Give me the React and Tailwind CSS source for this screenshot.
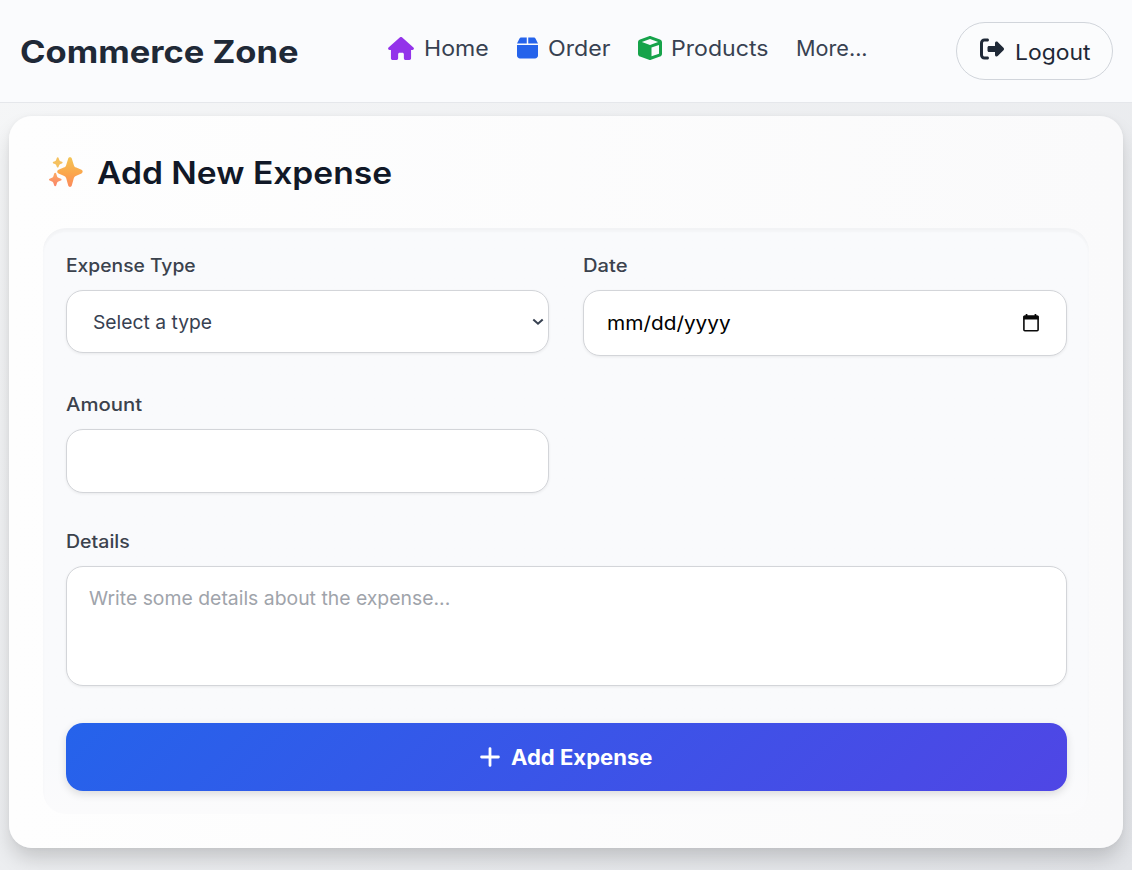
import { FaHouse, FaBox, FaCube, FaRightFromBracket } from "react-icons/fa6";

// Text set slightly wide inside a box of known width.
function Wide({ box, text, children }) {
  return (
    <span className={`block shrink-0 ${box}`}>
      <span className={`inline-block origin-left whitespace-nowrap ${text}`}>{children}</span>
    </span>
  );
}

function Sparkles() {
  return (
    <svg viewBox="0 0 36 36" className="h-[36px] w-[36px] shrink-0">
      <defs>
        <linearGradient id="spark" x1="0" y1="0" x2="0" y2="1">
          <stop offset="0" stopColor="#f3c556" />
          <stop offset="0.55" stopColor="#fba64c" />
          <stop offset="1" stopColor="#fb8a5e" />
        </linearGradient>
        <linearGradient id="sparkLow" x1="0" y1="0" x2="0" y2="1">
          <stop offset="0" stopColor="#fcaa62" />
          <stop offset="1" stopColor="#fa8468" />
        </linearGradient>
      </defs>
      <path fill="url(#spark)" d="M22 3.200c.9 0 1.500.5 1.800 1.400l2 6.300c.4 1.400 1.100 2.100 2.500 2.600l5.200 2.300c1.600.7 1.600 2.900 0 3.600l-5.200 2.300c-1.400.5-2.100 1.200-2.500 2.600l-2 7.300c-.5 1.900-3.100 1.900-3.600 0l-2-7.300c-.4-1.400-1.100-2.100-2.500-2.600l-5.200-2.200c-1.700-.7-1.700-3 0-3.700l5.200-2.300c1.400-.5 2.100-1.200 2.500-2.600l2-6.300c.3-.9.9-1.400 1.800-1.400z" />
      <path fill="#f5c15f" d="M9.700 3.200c.4 0 .7.200.8.6l.8 2.300c.2.6.5.9 1.100 1.100l1.600.6c.8.3.8 1.300 0 1.600l-1.600.6c-.6.200-.9.5-1.100 1.100l-.8 1.800c-.3.7-1.300.7-1.600 0l-.8-1.800c-.2-.6-.5-.9-1.100-1.100l-1.600-.6c-.8-.3-.8-1.300 0-1.600l1.600-.6c.6-.2.900-.5 1.100-1.100l.8-2.300c.1-.4.4-.6.8-.6z" />
      <path fill="url(#sparkLow)" d="M7.200 18.700c.5 0 .8.300 1 .8l.9 3c.2.700.6 1.100 1.300 1.300l2.500.9c.9.300.9 1.500 0 1.800l-2.500.9c-.7.300-1.100.600-1.300 1.300l-.9 2.900c-.3 1-1.700 1-2 0l-.9-2.900c-.2-.7-.6-1-1.300-1.300l-2.300-.9c-.9-.3-.9-1.500 0-1.800l2.300-.9c.7-.2 1.100-.6 1.300-1.300l.9-3c.2-.5.500-.8 1-.8z" />
    </svg>
  );
}

function CalendarIcon() {
  return (
    <svg viewBox="0 0 18 20" className="h-[20px] w-[18px]" fill="none">
      <rect x="1.900" y="3" width="14.200" height="14.800" rx="1" stroke="#0a0a0a" strokeWidth="1.600" />
      <path d="M1.500 3h15v3.400h-15zM3.700 0.900h1.700v2.600h-1.700zM12.600 0.900h1.700v2.600h-1.700z" fill="#0a0a0a" />
    </svg>
  );
}

const field =
  "rounded-[17px] border border-[#d3d5d9] bg-white shadow-[0_1px_3px_rgba(0,0,0,0.07)]";
const label = "text-[18px] leading-[27px] font-medium text-[#3b424d]";
const navText = "text-[21px] leading-[30px]";

export default function App() {
  return (
    <div className="flex h-[870px] w-[1132px] flex-col overflow-hidden bg-linear-to-br from-[#f6f7f8] to-[#e2e4e8] font-['Inter','Liberation_Sans',sans-serif]">
      <header className="flex h-[103px] shrink-0 items-center border-b border-[#e5e7eb] bg-[#fafbfd] pl-[20px]">
        <h1 className="w-[368px] shrink-0 pt-[2px] text-[#1f2937]">
          <Wide box="w-[282px]" text="text-[31px] leading-[40px] font-bold scale-x-[1.113]">Commerce Zone</Wide>
        </h1>
        <nav className="mb-[4px] flex h-[30px] w-[568px] shrink-0 items-center text-[#374151]">
          <a className="flex items-center gap-[10px]">
            <FaHouse className="mb-[2px] h-[23px] w-[26px] text-[#9333ea]" />
            <Wide box="w-[65px]" text={`${navText} scale-x-[1.1]`}>Home</Wide>
          </a>
          <a className="ml-[28px] flex items-center gap-[10px]">
            <FaBox className="mb-[2px] h-[24px] w-[21px] text-[#2563eb]" />
            <Wide box="w-[63px]" text={`${navText} scale-x-[1.105]`}>Order</Wide>
          </a>
          <a className="ml-[27px] flex items-center gap-[9px]">
            <FaCube className="mb-[2px] h-[24px] w-[24px] text-[#16a34a]" />
            <Wide box="w-[98px]" text={`${navText} scale-x-[1.1]`}>Products</Wide>
          </a>
          <a className="ml-[27px]">
            <Wide box="w-[74px]" text={`${navText} scale-x-[1.03]`}>More...</Wide>
          </a>
        </nav>
        <button className="flex h-[58px] w-[157px] items-center rounded-full border border-[#d1d5db] bg-[#fbfcfd] pl-[23px] text-[#1f2937]">
          <FaRightFromBracket className="mb-[4px] h-[24px] w-[24px]" />
          <span className="ml-[8px] pt-[1px]">
            <Wide box="w-[77px]" text="text-[21.5px] leading-[32px] scale-x-[1.065]">Logout</Wide>
          </span>
        </button>
      </header>

      <main className="mx-[9px] mt-[13px] flex h-[732px] w-[1114px] shrink-0 flex-col rounded-[23px] bg-linear-to-r from-[#fefefe] to-[#fafafb] px-[34px] shadow-[0_12px_20px_-2px_rgba(0,0,0,0.17),0_0_5px_rgba(0,0,0,0.04)]">
        <h2 className="flex h-[112px] items-center gap-[13px] pl-[5px] text-[#111827]">
          <Sparkles />
          <span className="pt-[2px]">
            <Wide box="w-[298px]" text="text-[31px] leading-[40px] font-semibold scale-x-[1.084]">Add New Expense</Wide>
          </span>
        </h2>

        <form className="flex h-[586px] flex-col rounded-[23px] bg-linear-to-b from-[#f9fafc] from-90% to-[#fbfbfc] px-[23px] pt-[24px] shadow-[inset_0_4px_2px_rgba(0,0,0,0.018),inset_0_2px_5px_rgba(0,0,0,0.015)]">
          <div className="grid grid-cols-[483px_484px] gap-x-[34px]">
            <div>
              <Wide box="h-[27px]" text={`${label} scale-x-[1.07]`}>Expense Type</Wide>
              <div className={`mt-[11px] flex h-[63px] items-center justify-between pr-[4px] pl-[26px] ${field}`}>
                <span className="pt-[2px] text-[#374151]">
                  <Wide box="w-[120px]" text="text-[19px] leading-[28px] scale-x-[1.015]">Select a type</Wide>
                </span>
                <svg viewBox="0 0 12 8" className="h-[8px] w-[12px]" fill="none" stroke="#374151" strokeWidth="2">
                  <path d="M1.300 1.400L6 5.700L10.700 1.400" />
                </svg>
              </div>
            </div>
            <div>
              <Wide box="h-[27px]" text={`${label} scale-x-[1.12]`}>Date</Wide>
              <div className={`mt-[11px] flex h-[66px] items-center justify-between pr-[26px] pl-[23px] text-black ${field}`}>
                <span className="pt-[2px]">
                  <Wide box="w-[124px]" text="text-[19px] leading-[28px] scale-x-[1.095]">mm/dd/yyyy</Wide>
                </span>
                <CalendarIcon />
              </div>
            </div>
          </div>

          <div className="mt-[35px] w-[483px]">
            <Wide box="h-[27px]" text={`${label} scale-x-[1.13]`}>Amount</Wide>
            <input type="text" className={`mt-[11px] block h-[64px] w-full px-[23px] text-[19px] outline-none ${field}`} />
          </div>

          <div className="mt-[35px]">
            <Wide box="h-[27px]" text={`${label} scale-x-[1.085]`}>Details</Wide>
            <div className={`mt-[11px] h-[120px] w-[1001px] pt-[18px] pl-[22px] text-[#9fa4ab] ${field}`}>
              <Wide box="w-[362px]" text="text-[19px] leading-[28px] scale-x-[1.02]">
                Write some details about the expense...
              </Wide>
            </div>
          </div>

          <button
            type="button"
            className="mt-[37px] flex h-[68px] w-[1001px] shrink-0 items-center rounded-[17px] bg-linear-[135deg] from-[#2563eb] to-[#4f46e5] pl-[414px] text-white shadow-[0_3px_8px_rgba(0,0,0,0.13)]"
          >
            <svg viewBox="0 0 20 20" className="mb-[1px] h-[20px] w-[20px] shrink-0" fill="none" stroke="currentColor" strokeWidth="2.800" strokeLinecap="round">
              <path d="M10 1.600v16.800M1.600 10h16.800" />
            </svg>
            <span className="ml-[11px] pt-[2px] text-left">
              <Wide box="w-[142px]" text="text-[21px] leading-[32px] font-bold scale-x-[1.05]">Add Expense</Wide>
            </span>
          </button>
        </form>
      </main>
    </div>
  );
}
